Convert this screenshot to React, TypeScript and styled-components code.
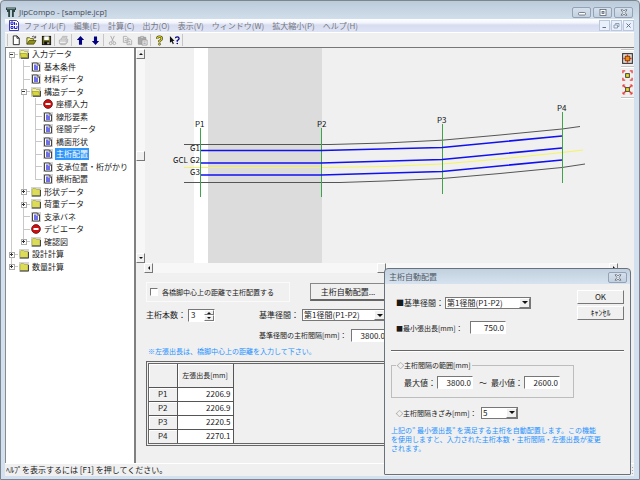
import React from "react";
import styled, { createGlobalStyle, css } from "styled-components";

const GlobalStyle = createGlobalStyle`
  * { box-sizing: border-box; }
  html, body { margin: 0; padding: 0; background: #e9eef4; }
  body, button, input, select {
    font-family: "Noto Sans CJK JP", "Noto Sans", sans-serif;
    font-size: 8px;
    line-height: 12px;
    color: #1a1a1a;
  }
  button, input, select { margin: 0; padding: 0; border-radius: 0; }
  svg { display: block; flex: none; }
`;

/* ---------- window frame ---------- */

const Window = styled.div`
  position: relative;
  display: flex;
  flex-direction: column;
  width: 100%;
  min-height: 100vh;
  padding: 0 5px 3px 4px;
  border: 1px solid #7d858e;
  border-radius: 4px 4px 0 0;
  background: linear-gradient(#bccbda, #d3e0ee 20px, #d3e0ef);
  overflow: hidden;
`;

const TitleBar = styled.header`
  display: flex;
  align-items: center;
  height: 18px;
  padding: 4px 1px 0 1px;
  color: #3f4954;
`;

const Title = styled.h1`
  flex: 1;
  margin: 0 0 0 3px;
  font-family: "Open Sans", "Noto Sans CJK JP", sans-serif;
  font-size: 8px;
  font-weight: 400;
  line-height: 12px;
`;

const CaptionButtons = styled.div`
  display: flex;
  gap: 2px;
`;

const CaptionButton = styled.button`
  display: grid;
  place-items: center;
  width: 19px;
  height: 11px;
  border: 1px solid #93a2b4;
  border-radius: 2px;
  background: linear-gradient(#d5e0ec, #c3d0df);
`;

const MenuBar = styled.nav`
  display: flex;
  align-items: center;
  height: 13px;
  padding-left: 4px;
  background: linear-gradient(#ffffff, #f2f4fc 4px, #d7dcf0 6px, #dfe4f5);
`;

const MenuItem = styled.button`
  margin-left: 8px;
  border: 0;
  background: none;
  color: #74777f;
  white-space: nowrap;
  &:first-of-type { margin-left: 5px; }
`;

const ChildButtons = styled.div`
  display: flex;
  gap: 1px;
  margin-left: auto;
`;

const ChildButton = styled.button`
  display: grid;
  place-items: center;
  width: 11px;
  height: 11px;
  border: 1px solid #b9c8da;
  background: #eaf0fa;
`;

const ToolBar = styled.div`
  display: flex;
  align-items: center;
  height: 15px;
  padding-left: 2px;
  border-top: 1px solid #fff;
  background: #f0f0f0;
`;

const ToolButton = styled.button`
  display: grid;
  place-items: center;
  width: 15px;
  height: 13px;
  border: 0;
  background: none;
`;

const ToolSeparator = styled.span`
  width: 1px;
  height: 12px;
  margin-right: 1px;
  background: #c6c6c6;
`;

const Main = styled.main`
  display: flex;
  flex: 1;
  border-top: 1px solid #777;
  background: #f0f0f0;
`;

const StatusBar = styled.footer`
  display: flex;
  align-items: center;
  justify-content: space-between;
  height: 13px;
  padding-left: 1px;
  border-top: 1px solid #fff;
  background: #f0f0f0;
`;

/* ---------- tree ---------- */

const TreePane = styled.aside`
  flex: none;
  width: 131px;
  border-left: 1px solid #8a8a8a;
  border-right: 2px solid #808080;
  background: #fff;
`;

const Tree = styled.ul`
  display: grid;
  grid-auto-rows: 1fr;
  height: 225px;
  margin: 0;
  padding: 0;
  list-style: none;
`;

const TreeRow = styled.li`
  display: flex;
  align-items: center;
  min-height: 0;
`;

const TreeLabel = styled.button<{ $selected?: boolean }>`
  height: 12px;
  margin-left: 2px;
  padding: 0 1px;
  border: 0;
  background: ${(p) => (p.$selected ? "#3096fa" : "none")};
  color: ${(p) => (p.$selected ? "#fff" : "#1a1a1a")};
  white-space: nowrap;
`;

type Guide = "line" | "tee" | "end" | "plus" | "minus" | "plusEnd" | "root";
type IconKind = "open" | "folder" | "doc" | "stop";

const GuideMark = ({ kind }: { kind: Guide }) => {
  const box = kind === "plus" || kind === "minus" || kind === "plusEnd" || kind === "root";
  const top = kind !== "root";
  const bottom = kind !== "end" && kind !== "plusEnd";
  return (
    <svg width="12" height="13" viewBox="0 0 12 13" shapeRendering="crispEdges">
      <g fill="#c8c8c8">
        {top && <rect x="5" y="0" width="1" height="7" />}
        {bottom && <rect x="5" y="6" width="1" height="7" />}
        {kind !== "line" && <rect x="5" y="6" width="7" height="1" />}
      </g>
      {box && (
        <>
          <rect x="3" y="4" width="5" height="5" fill="#fff" stroke="#aaa" />
          <rect x="4" y="6" width="3" height="1" fill="#333" />
          {(kind === "plus" || kind === "plusEnd") && <rect x="5" y="5" width="1" height="3" fill="#333" />}
        </>
      )}
    </svg>
  );
};

const NodeIconSvg = styled.svg`
  margin-left: 1px;
`;

const NodeIcon = ({ kind }: { kind: IconKind }) => (
  <NodeIconSvg width="10" height="10" viewBox="0 0 10 10">
    {kind !== "stop" && <rect width="10" height="10" fill="#d4d4d4" />}
    {kind === "folder" && (
      <>
        <path d="M1 2.5 2 1.5H4.5L5.5 2.5H9V8.5H1Z" fill="#dcdc58" stroke="#a3a345" strokeWidth=".6" />
        <path d="M1 9H9.5V3" fill="none" stroke="#444" />
      </>
    )}
    {kind === "open" && (
      <>
        <path d="M1 2.5 2 1.5H4.5L5.5 2.5H8.5V8.5H1Z" fill="#f4f1a0" stroke="#a3a345" strokeWidth=".6" />
        <path d="M1 4.5H7.5L9 8.5H2.5Z" fill="#d6d63e" stroke="#8c8c2e" strokeWidth=".6" />
        <path d="M2 9.3H9.5V4" fill="none" stroke="#444" />
      </>
    )}
    {kind === "doc" && (
      <>
        <path d="M1.5 1H6.5L8.5 3V9H1.5Z" fill="#fff" stroke="#444" />
        <path d="M3 2.5H5.5V4H7V8H3Z" fill="#6f6fe8" />
        <path d="M6.3 1V3.3H8.5" fill="none" stroke="#444" strokeWidth=".7" />
      </>
    )}
    {kind === "stop" && (
      <>
        <circle cx="5" cy="5" r="4.4" fill="#cf0f0f" stroke="#5c1010" strokeWidth=".8" />
        <rect x="2.5" y="4" width="5" height="2" fill="#fff" />
      </>
    )}
  </NodeIconSvg>
);

const nodes: { label: string; icon: IconKind; guides: Guide[]; selected?: boolean }[] = [
  { label: "入力データ", icon: "open", guides: ["root"] },
  { label: "基本条件", icon: "doc", guides: ["line", "tee"] },
  { label: "材料データ", icon: "doc", guides: ["line", "tee"] },
  { label: "構造データ", icon: "open", guides: ["line", "minus"] },
  { label: "座標入力", icon: "stop", guides: ["line", "line", "tee"] },
  { label: "線形要素", icon: "doc", guides: ["line", "line", "tee"] },
  { label: "径間データ", icon: "doc", guides: ["line", "line", "tee"] },
  { label: "橋面形状", icon: "doc", guides: ["line", "line", "tee"] },
  { label: "主桁配置", icon: "doc", guides: ["line", "line", "tee"], selected: true },
  { label: "支承位置・桁がかり", icon: "doc", guides: ["line", "line", "tee"] },
  { label: "横桁配置", icon: "doc", guides: ["line", "line", "end"] },
  { label: "形状データ", icon: "folder", guides: ["line", "plus"] },
  { label: "荷重データ", icon: "folder", guides: ["line", "plus"] },
  { label: "支承バネ", icon: "doc", guides: ["line", "tee"] },
  { label: "デビエータ", icon: "stop", guides: ["line", "tee"] },
  { label: "確認図", icon: "folder", guides: ["line", "plusEnd"] },
  { label: "設計計算", icon: "folder", guides: ["plus"] },
  { label: "数量計算", icon: "folder", guides: ["plusEnd"] },
];

/* ---------- content ---------- */

const Content = styled.section`
  display: flex;
  flex: 1;
  flex-direction: column;
  min-width: 0;
`;

const ViewRow = styled.div`
  display: flex;
  height: 215px;
`;

const raised = css`
  border: 1px solid;
  border-color: #fff #777 #777 #fff;
  background: #f0f0f0;
`;

const sunken = css`
  border: 1px solid;
  border-color: #777 #fff #fff #777;
  background: #fff;
`;

const ScrollTrack = styled.div<{ $horizontal?: boolean }>`
  display: flex;
  flex: none;
  background: #f7f7f7;
  ${(p) =>
    p.$horizontal
      ? css`height: 10px; margin: 0 2px 0 8px;`
      : css`flex-direction: column; width: 9px; padding-top: 1px;`}
`;

const ScrollSpace = styled.span<{ $grow: number }>`
  flex: ${(p) => p.$grow} 1 0;
`;

const ScrollButton = styled.button`
  display: grid;
  place-items: center;
  flex: none;
  width: 9px;
  height: 10px;
  ${raised}
`;

const Drawing = styled.svg`
  flex: 1;
  min-width: 0;
  height: 215px;
  text { font-size: 8px; fill: #111; }
`;

const SideBar = styled.div`
  display: flex;
  flex: none;
  flex-direction: column;
  align-items: center;
  width: 14px;
  height: 51px;
  padding-top: 1px;
  gap: 2px;
`;

const SideButton = styled.button`
  display: grid;
  place-items: center;
  width: 12px;
  height: 12px;
  border: 0;
  background: none;
`;

const SideRule = styled.span`
  width: 13px;
  height: 2px;
  border-top: 1px solid #c4c4c4;
  border-bottom: 1px solid #fff;
`;

const Form = styled.form`
  display: flex;
  flex: 1;
  flex-direction: column;
  padding: 9px 20px 17px 10px;
`;

const FormRow = styled.div`
  display: flex;
  align-items: center;
  height: 20px;
  &:first-child { margin-bottom: 3px; }
`;

const CheckGroup = styled.label`
  display: flex;
  align-items: center;
  width: 144px;
  height: 20px;
  padding-left: 3px;
  border: 1px solid #fafafa;
  font-size: 7px;
  white-space: nowrap;
`;

const CheckBox = styled.input`
  appearance: none;
  flex: none;
  width: 8px;
  height: 8px;
  margin-right: 4px;
  ${sunken}
`;

const PushButton = styled.button<{ $wide?: boolean }>`
  ${raised}
  white-space: nowrap;
  ${(p) =>
    p.$wide
      ? css`width: 76px; height: 18px; margin-left: 20px; border-color: #888 #666 #666 #888; border-bottom-width: 2px;`
      : css`width: 47px; height: 14px; line-height: 10px;`}
`;

const FieldLabel = styled.label<{ $width: number; $small?: boolean }>`
  flex: none;
  width: ${(p) => p.$width}px;
  font-size: ${(p) => (p.$small ? 7 : 8)}px;
  white-space: nowrap;
`;

const FieldCell = styled.div<{ $width: number }>`
  display: flex;
  align-items: center;
  width: ${(p) => p.$width}px;
`;

const NumberInput = styled.input`
  width: 36px;
  height: 13px;
  padding-right: 1px;
  text-align: right;
  line-height: 10px;
  ${sunken}
`;

const Spin = styled.div`
  display: flex;
  width: 27px;
  height: 13px;
  ${sunken}
`;

const SpinInput = styled.input`
  flex: 1;
  min-width: 0;
  padding-left: 2px;
  border: 0;
  background: none;
  line-height: 10px;
`;

const SpinButtons = styled.div`
  display: grid;
  grid-template-rows: 1fr 1fr;
  width: 10px;
`;

const SpinButton = styled.button`
  display: grid;
  place-items: center;
  min-height: 0;
  ${raised}
`;

const SelectBox = styled.div<{ $width: number }>`
  display: grid;
  grid-template-columns: 1fr 11px;
  flex: none;
  width: ${(p) => p.$width}px;
  height: 12px;
  border: 1px solid #777;
  background: #fff;
`;

const SelectField = styled.select`
  grid-area: 1 / 1 / 2 / 3;
  appearance: none;
  min-width: 0;
  padding-left: 1px;
  border: 0;
  background: none;
  line-height: 10px;
`;

const SelectArrow = styled.span`
  display: grid;
  grid-area: 1 / 2 / 2 / 3;
  place-items: center;
  pointer-events: none;
  ${raised}
`;

const Note = styled.p`
  margin: 0;
  padding-left: 2px;
  color: #1e90ff;
  font-size: 7px;
  line-height: 12px;
`;

const GridFrame = styled.div`
  margin-top: 4px;
  border: 3px double #666;
`;

const DataTable = styled.table`
  border-collapse: collapse;
  th, td {
    height: 14px;
    padding: 0 2px;
    border: 1px solid #555;
    line-height: 12px;
    font-weight: 400;
  }
  th { width: 28px; background: #f0f0f0; box-shadow: inset 1px 1px #fff; }
  td { background: #fff; text-align: right; }
  thead th { height: 23px; }
  thead th + th { width: 56px; padding: 0; font-size: 7px; white-space: nowrap; }
  tr > :first-child { border-left: 0; }
  thead th { border-top: 0; }
  tbody tr:last-child > * { border-bottom: 0; }
`;

/* ---------- dialog ---------- */

const Dialog = styled.div`
  position: absolute;
  right: 8px;
  bottom: 4px;
  width: 247px;
  border: 1px solid #68727c;
  border-radius: 4px 4px 1px 1px;
  background: linear-gradient(#c2d0df, #d6e2ef 15px, #f0f0f0 15px);
`;

const DialogTitle = styled.div`
  display: flex;
  align-items: center;
  justify-content: space-between;
  height: 15px;
  padding: 1px 3px 0 4px;
  color: #4e5964;
`;

const DialogBody = styled.form`
  display: flex;
  flex-direction: column;
  height: 190px;
  padding: 6px 6px 0;
`;

const DialogTop = styled.div`
  display: flex;
  justify-content: space-between;
  height: 61px;
  padding-left: 5px;
  border-bottom: 1px solid #666;
  box-shadow: 0 1px #fff;
`;

const FieldStack = styled.div`
  display: flex;
  flex-direction: column;
  gap: 12px;
  padding-top: 6px;
`;

const DialogField = styled.div`
  display: flex;
  align-items: center;
  height: 13px;
`;

const ButtonStack = styled.div`
  display: flex;
  flex-direction: column;
  gap: 2px;
`;

const RangeGroup = styled.fieldset`
  display: flex;
  align-items: center;
  width: 183px;
  height: 38px;
  margin: 9px 0 0;
  padding: 6px 0 0 12px;
  border: 1px solid #bdbdbd;
  legend { margin-left: -8px; padding: 0 1px; font-size: 7px; line-height: 10px; }
`;

const Tilde = styled.span`
  width: 18px;
  padding-left: 6px;
`;

const StepField = styled(DialogField)`
  margin: 8px 0 0 5px;
`;

const Explanation = styled.p`
  margin: 7px 0 0;
  color: #1e90ff;
  font-size: 7px;
  line-height: 9px;
  white-space: nowrap;
`;

/* ---------- small drawings ---------- */

const Arrow = ({ dir }: { dir: "up" | "down" | "left" | "right" }) => {
  const d = { up: "M0 3 2 1 4 3Z", down: "M0 1H4L2 3Z", left: "M3 0V4L1 2Z", right: "M1 0V4L3 2Z" }[dir];
  return (
    <svg width="4" height="4" viewBox="0 0 4 4">
      <path d={d} fill="#111" />
    </svg>
  );
};

const DropArrow = () => (
  <svg width="6" height="3" viewBox="0 0 6 3">
    <path d="M0 0H6L3 3Z" fill="#111" />
  </svg>
);

const CloseMark = () => (
  <svg width="8" height="7" viewBox="0 0 8 7">
    <path d="M1 .8H2.8L4 2.2 5.2.8H7L5 3.5 7 6.2H5.2L4 4.8 2.8 6.2H1L3 3.5Z" fill="#fff" stroke="#5b6674" strokeWidth=".8" />
  </svg>
);

const Select = ({ id, width, value }: { id: string; width: number; value: string }) => (
  <SelectBox $width={width}>
    <SelectField id={id} defaultValue={value}>
      <option>{value}</option>
    </SelectField>
    <SelectArrow>
      <DropArrow />
    </SelectArrow>
  </SelectBox>
);

const tools: { name: string; art: React.ReactNode }[][] = [
  [
    { name: "新規", art: <path d="M2.5 1H6.5L9 3.5V10.5H2.5Z M6.5 1V3.5H9" fill="#fff" stroke="#222" /> },
    {
      name: "開く",
      art: (
        <>
          <path d="M1 10V3H4L5 4H8V6" fill="#f5f08a" stroke="#55551a" />
          <path d="M1 10 3.5 6H11L8.5 10Z" fill="#8f8f1c" stroke="#44440f" strokeWidth=".8" />
          <path d="M6.5 2Q8.5.3 10 2.8M10.5 1V3.2H8.4" fill="none" stroke="#222" strokeWidth=".8" />
        </>
      ),
    },
    {
      name: "保存",
      art: (
        <>
          <rect x="1.5" y="1.5" width="9" height="9" fill="#70701c" stroke="#111" />
          <rect x="3.5" y="1.5" width="5" height="4" fill="#fff" />
          <rect x="3.5" y="7" width="5.5" height="3.5" fill="#111" />
          <rect x="7" y="8" width="1.4" height="2" fill="#eee" />
        </>
      ),
    },
  ],
  [
    {
      name: "印刷",
      art: (
        <path
          d="M3.5 5 5 1.5H10L8.5 5M1.5 5.5 3 4.5H10.5V8L9 9.5H1.5ZM1.5 6.5H9V9.5M9 6.5 10.5 5M3 9.5V10.5H8V9.5M5 3H8.5"
          fill="none"
          stroke="#b4b4b4"
        />
      ),
    },
  ],
  [
    { name: "上へ", art: <path d="M6 1 10 5.5H7.7V10.5H4.3V5.5H2Z" fill="#000080" /> },
    { name: "下へ", art: <path d="M6 11 10 6.5H7.7V1.5H4.3V6.5H2Z" fill="#000080" /> },
  ],
  [
    {
      name: "切り取り",
      art: (
        <g fill="none" stroke="#a9a9a9">
          <path d="M4 1 7 7.5M8 1 5 7.5" />
          <circle cx="4" cy="9" r="1.5" />
          <circle cx="8" cy="9" r="1.5" />
        </g>
      ),
    },
    {
      name: "コピー",
      art: <path d="M1.5 1.5H5L6.5 3V8H1.5ZM5.5 4.5H9L10.5 6V10.5H5.5ZM3 4H5M3 6H5M7 7H9M7 9H9" fill="#eee" stroke="#a9a9a9" strokeWidth=".9" />,
    },
    {
      name: "貼り付け",
      art: (
        <>
          <path d="M1.5 2.5H9.5V10H1.5Z" fill="#aaa" stroke="#999" />
          <path d="M4 1.5H7V3.5H4Z" fill="#ddd" stroke="#999" strokeWidth=".7" />
          <path d="M5.5 5.5H11V11H5.5ZM7 7.5H9.5M7 9.2H9.5" fill="#f0f0f0" stroke="#999" strokeWidth=".9" />
        </>
      ),
    },
  ],
  [
    {
      name: "バージョン情報",
      art: (
        <>
          <path d="M3.5 4.2Q3.5 1.8 6 1.8T8.5 4Q8.5 5.3 6 6.5V8" fill="none" stroke="#333" strokeWidth="2.6" />
          <path d="M3.5 4.2Q3.5 1.8 6 1.8T8.5 4Q8.5 5.3 6 6.5V8" fill="none" stroke="#d8d000" strokeWidth="1.3" />
          <circle cx="6" cy="10" r="1.2" fill="#d8d000" stroke="#333" strokeWidth=".6" />
        </>
      ),
    },
    {
      name: "状況依存ヘルプ",
      art: (
        <>
          <path d="M1 1V8.5L2.8 7 4.2 10 5.3 9.4 4 6.6H6Z" fill="#111" />
          <path d="M7 3.5Q7 2 9 2T11 3.7Q11 5 9 6V7.3" fill="none" stroke="#000080" strokeWidth="1.4" />
          <circle cx="9" cy="9.3" r=".9" fill="#000080" />
        </>
      ),
    },
  ],
];

const corners = "M1 3.5V1H3.5M8.5 1H11V3.5M11 8.5V11H8.5M3.5 11H1V8.5";

const menus = ["ファイル(F)", "編集(E)", "計算(C)", "出力(O)", "表示(V)", "ウィンドウ(W)", "拡大縮小(P)", "ヘルプ(H)"];

const overhangs = [
  ["P1", "2206.9"],
  ["P2", "2206.9"],
  ["P3", "2220.5"],
  ["P4", "2270.1"],
];

const BridgePlan = () => (
  <Drawing viewBox="145 48 475 215" preserveAspectRatio="xMinYMin meet" role="img" aria-label="主桁配置図">
    <rect x="145" y="48" width="475" height="215" fill="#f0f0f0" />
    <rect x="194" y="48" width="14" height="215" fill="#fff" />
    <rect x="208" y="48" width="114" height="215" fill="#dcdcdc" />
    <g fill="none" stroke="#555">
      <path d="M184 144.500H330L385 143 442 140.200 500 135 562 129 580 126.500" />
      <path d="M184 182.500H340L385 181 442 178.500 500 173.500 562 167.500 585 164" />
    </g>
    <path d="M184 167.500H322L385 166.500 442 164 500 159 562 152.500 583 150" fill="none" stroke="#f4f460" />
    <path d="M200.500 128V197M321.500 128V197M442.500 124V194M562.500 112V183" stroke="#3fa34a" />
    <g fill="none" stroke="#1010f0" strokeWidth="1.600">
      <path d="M201 150.500H321L442 147.500 562 136" />
      <path d="M201 163H321L442 159.500 562 148" />
      <path d="M201 175H321L442 171.500 562 160" />
    </g>
    <text x="195" y="127">P1</text>
    <text x="317" y="127">P2</text>
    <text x="437" y="123">P3</text>
    <text x="557" y="111">P4</text>
    <text x="190" y="151">G1</text>
    <text x="190" y="163">G2</text>
    <text x="190" y="175">G3</text>
    <text x="173" y="163">GCL</text>
  </Drawing>
);

export default function App() {
  return (
    <>
      <GlobalStyle />
      <Window>
        <TitleBar>
          <svg width="10" height="10" viewBox="0 0 10 10">
            <path d="M0 .5H10V3H0ZM1 3H4V10H2.200V5H1ZM6 3H9V5H7.800V10H6Z" fill="#2c4443" />
            <path d="M1 1.700H9M5 3V10" stroke="#a9c4c2" strokeWidth=".7" />
          </svg>
          <Title>JipCompo - [sample.jcp]</Title>
          <CaptionButtons>
            <CaptionButton aria-label="最小化">
              <svg width="8" height="7" viewBox="0 0 8 7">
                <rect x=".5" y="3.500" width="7" height="2.500" rx="1" fill="#fff" stroke="#5b6674" strokeWidth=".8" />
              </svg>
            </CaptionButton>
            <CaptionButton aria-label="最大化">
              <svg width="8" height="7" viewBox="0 0 8 7">
                <rect x="1" y=".5" width="6" height="6" fill="#fff" stroke="#5b6674" strokeWidth=".8" />
                <rect x="3" y="2.500" width="2" height="2" fill="#b8c6d6" stroke="#5b6674" strokeWidth=".8" />
              </svg>
            </CaptionButton>
            <CaptionButton aria-label="閉じる">
              <CloseMark />
            </CaptionButton>
          </CaptionButtons>
        </TitleBar>

        <MenuBar>
          <svg width="10" height="11" viewBox="0 0 10 11">
            <path d="M.5.500H7.500L9.500 2.500V10.500H.5Z" fill="#fff" stroke="#2b2b8f" strokeWidth=".9" />
            <path d="M2 2V4.500H4V2ZM5.500 2V5M2 6.500V8.500H4V6.500ZM5.500 6V8.500H8V6M7.300 3V5" fill="none" stroke="#2222cc" />
          </svg>
          {menus.map((m) => (
            <MenuItem key={m}>{m}</MenuItem>
          ))}
          <ChildButtons>
            <ChildButton aria-label="子ウィンドウを最小化">
              <svg width="7" height="7" viewBox="0 0 7 7"><path d="M1.500 5.500H5" stroke="#5b7390" /></svg>
            </ChildButton>
            <ChildButton aria-label="子ウィンドウを元に戻す">
              <svg width="7" height="7" viewBox="0 0 7 7">
                <path d="M2.500 2.500V1.500H6V4.500H5M1 3H4.500V6H1Z" fill="none" stroke="#8296ad" strokeWidth=".9" />
              </svg>
            </ChildButton>
            <ChildButton aria-label="子ウィンドウを閉じる">
              <svg width="7" height="7" viewBox="0 0 7 7"><path d="M1.500 1.500 5.500 5.500M5.500 1.500 1.500 5.500" stroke="#5b7390" /></svg>
            </ChildButton>
          </ChildButtons>
        </MenuBar>

        <ToolBar>
          {tools.map((group, i) => (
            <React.Fragment key={i}>
              <ToolSeparator />
              {group.map((t) => (
                <ToolButton key={t.name} aria-label={t.name}>
                  <svg width="11" height="11" viewBox="0 0 12 12">{t.art}</svg>
                </ToolButton>
              ))}
            </React.Fragment>
          ))}
          <ToolSeparator />
        </ToolBar>

        <Main>
          <TreePane>
            <Tree>
              {nodes.map((n) => (
                <TreeRow key={n.label}>
                  {n.guides.map((g, i) => (
                    <GuideMark key={i} kind={g} />
                  ))}
                  <NodeIcon kind={n.icon} />
                  <TreeLabel $selected={n.selected}>{n.label}</TreeLabel>
                </TreeRow>
              ))}
            </Tree>
          </TreePane>

          <Content>
            <ViewRow>
              <ScrollTrack>
                <ScrollButton aria-label="上へスクロール"><Arrow dir="up" /></ScrollButton>
                <ScrollSpace $grow={1} />
                <ScrollButton aria-label="縦位置" />
                <ScrollSpace $grow={1} />
                <ScrollButton aria-label="下へスクロール"><Arrow dir="down" /></ScrollButton>
              </ScrollTrack>
              <BridgePlan />
            </ViewRow>
            <ScrollTrack $horizontal>
              <ScrollButton aria-label="左へスクロール"><Arrow dir="left" /></ScrollButton>
              <ScrollSpace $grow={1} />
              <ScrollButton aria-label="横位置" />
              <ScrollSpace $grow={1} />
              <ScrollButton aria-label="右へスクロール"><Arrow dir="right" /></ScrollButton>
            </ScrollTrack>

            <Form>
              <FormRow>
                <CheckGroup>
                  <CheckBox type="checkbox" />
                  各橋脚中心上の距離で主桁配置する
                </CheckGroup>
                <PushButton type="button" $wide>主桁自動配置...</PushButton>
              </FormRow>
              <FormRow>
                <FieldCell $width={113}>
                  <FieldLabel htmlFor="girders" $width={42}>主桁本数：</FieldLabel>
                  <Spin>
                    <SpinInput id="girders" defaultValue="3" />
                    <SpinButtons>
                      <SpinButton type="button" aria-label="増やす"><Arrow dir="up" /></SpinButton>
                      <SpinButton type="button" aria-label="減らす"><Arrow dir="down" /></SpinButton>
                    </SpinButtons>
                  </Spin>
                </FieldCell>
                <FieldLabel htmlFor="span" $width={43}>基準径間：</FieldLabel>
                <Select id="span" width={84} value="第1径間(P1-P2)" />
              </FormRow>
              <FormRow>
                <FieldCell $width={113} />
                <FieldLabel htmlFor="pitch" $width={92} $small>基準径間の主桁間隔[mm]：</FieldLabel>
                <NumberInput id="pitch" defaultValue="3800.0" />
              </FormRow>
              <Note>※左張出長は、橋脚中心上の距離を入力して下さい。</Note>
              <GridFrame>
                <DataTable>
                  <thead>
                    <tr>
                      <th />
                      <th>左張出長[mm]</th>
                    </tr>
                  </thead>
                  <tbody>
                    {overhangs.map(([pier, value]) => (
                      <tr key={pier}>
                        <th>{pier}</th>
                        <td>{value}</td>
                      </tr>
                    ))}
                  </tbody>
                </DataTable>
              </GridFrame>
            </Form>
          </Content>

          <SideBar>
            <SideRule />
            <SideButton aria-label="全体表示">
              <svg width="11" height="11" viewBox="0 0 12 12">
                <rect x=".7" y=".7" width="10.600" height="10.600" fill="#e6e6e6" stroke="#333" strokeWidth="1.200" />
                <path d="M6 1.500V10.500M1.500 6H10.500" stroke="#e03030" strokeWidth="1.600" />
                <rect x="3.500" y="3.500" width="5" height="5" fill="#f08a10" stroke="#7a3a00" />
              </svg>
            </SideButton>
            <SideRule />
            <SideButton aria-label="拡大">
              <svg width="11" height="11" viewBox="0 0 12 12">
                <path d={corners} fill="none" stroke="#e84040" strokeWidth="1.400" />
                <rect x="4" y="4" width="4" height="4" fill="#f0e020" stroke="#333" />
              </svg>
            </SideButton>
            <SideButton aria-label="縮小">
              <svg width="11" height="11" viewBox="0 0 12 12">
                <path d="M1 1 4 4M11 1 8 4M1 11 4 8M11 11 8 8" stroke="#e84040" strokeWidth="1.600" />
                <path d={corners} fill="none" stroke="#e84040" strokeWidth=".8" />
                <rect x="4" y="4" width="4" height="4" fill="#f0e020" stroke="#333" />
              </svg>
            </SideButton>
            <SideRule />
          </SideBar>
        </Main>

        <StatusBar>
          <span>ﾍﾙﾌﾟを表示するには [F1] を押してください。</span>
          <svg width="8" height="8" viewBox="0 0 8 8">
            <path d="M6 1H7V2H6ZM6 4H7V5H6ZM3 4H4V5H3ZM6 7H7V8H6ZM3 7H4V8H3ZM0 7H1V8H0Z" fill="#aaa" />
          </svg>
        </StatusBar>

        <Dialog role="dialog" aria-label="主桁自動配置">
          <DialogTitle>
            主桁自動配置
            <CaptionButton aria-label="ダイアログを閉じる">
              <CloseMark />
            </CaptionButton>
          </DialogTitle>
          <DialogBody>
            <DialogTop>
              <FieldStack>
                <DialogField>
                  <FieldLabel htmlFor="d-span" $width={49}>■基準径間：</FieldLabel>
                  <Select id="d-span" width={86} value="第1径間(P1-P2)" />
                </DialogField>
                <DialogField>
                  <FieldLabel htmlFor="d-min" $width={74} $small>■最小張出長[mm]：</FieldLabel>
                  <NumberInput id="d-min" defaultValue="750.0" />
                </DialogField>
              </FieldStack>
              <ButtonStack>
                <PushButton type="button">OK</PushButton>
                <PushButton type="button">ｷｬﾝｾﾙ</PushButton>
              </ButtonStack>
            </DialogTop>
            <RangeGroup>
              <legend>◇主桁間隔の範囲[mm]</legend>
              <FieldLabel htmlFor="d-max" $width={33}>最大値：</FieldLabel>
              <NumberInput id="d-max" defaultValue="3800.0" />
              <Tilde>～</Tilde>
              <FieldLabel htmlFor="d-low" $width={33}>最小値：</FieldLabel>
              <NumberInput id="d-low" defaultValue="2600.0" />
            </RangeGroup>
            <StepField>
              <FieldLabel htmlFor="d-step" $width={85} $small>◇主桁間隔きざみ[mm]：</FieldLabel>
              <Select id="d-step" width={37} value="5" />
            </StepField>
            <Explanation>
              上記の” 最小張出長” を満足する主桁を自動配置します。この機能
              <br />
              を使用しますと、入力された主桁本数・主桁間隔・左張出長が変更
              <br />
              されます。
            </Explanation>
          </DialogBody>
        </Dialog>
      </Window>
    </>
  );
}
